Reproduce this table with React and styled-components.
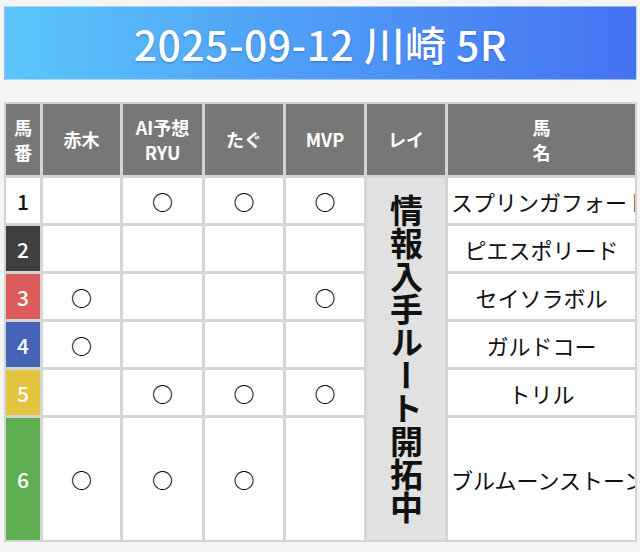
import React from "react";
import styled, { createGlobalStyle } from "styled-components";

const Global = createGlobalStyle`
  html, body { margin: 0; padding: 0; background: #f4f4f4; }
  body { font-family: "Noto Sans CJK JP", "Noto Sans", sans-serif; color: #111; }
`;

const Page = styled.div`
  padding: 6px 3px 10px 4px;
  display: flex;
  flex-direction: column;
  gap: 22px;
`;

const Banner = styled.div`
  height: 74px;
  box-sizing: border-box;
  border: 1px solid rgba(255, 255, 255, 0.45);
  background: linear-gradient(90deg, #5cc7fb 0%, #4f9ff6 45%, #4672f2 100%);
  display: flex;
  align-items: center;
  justify-content: center;
`;

const Title = styled.h1`
  margin: 0;
  color: #fff;
  font-size: 41px;
  font-weight: 500;
  letter-spacing: 0.4px;
  text-shadow: 0 1px 2px rgba(20, 60, 160, 0.45);
`;

const Table = styled.table`
  width: 633px;
  table-layout: fixed;
  border-collapse: separate;
  border-spacing: 1px;
  background: #d4d4d4;
`;

const Cell = styled.td`
  border: 1px solid #d4d4d4;
  padding: 0 6px;
  text-align: center;
  vertical-align: middle;
  overflow: hidden;
  white-space: nowrap;
`;

const HeadCell = styled.th`
  border: 1px solid #d4d4d4;
  background: #777777;
  color: #fff;
  font-size: 18px;
  font-weight: 700;
  line-height: 25px;
  height: 71px;
  padding: 0;
  text-align: center;
  vertical-align: middle;
`;

const frameColors = {
  1: ["#ffffff", "#111"],
  2: ["#3f3f3f", "#fff"],
  3: ["#dc5b5b", "#fff"],
  4: ["#4563b6", "#fff"],
  5: ["#e2c440", "#fff"],
  6: ["#5fae52", "#fff"],
};

const NumCell = styled(Cell)`
  padding: 0;
  font-size: 21px;
  font-weight: 500;
  background: ${(p) => frameColors[p.$n][0]};
  color: ${(p) => frameColors[p.$n][1]};
`;

const MarkCell = styled(Cell)`
  background: #fff;
  font-size: 21px;
  font-weight: 700;
  color: #000;
`;

const ReiCell = styled(Cell)`
  background: #e1e1e1;
  padding: 0;
`;

const VerticalText = styled.div`
  writing-mode: vertical-rl;
  font-size: 33px;
  font-weight: 700;
  color: #111;
  line-height: 1;
  margin: 0 auto;
  white-space: nowrap;
`;

const NameCell = styled(Cell)`
  background: #fff;
  font-size: 22px;
  color: #111;
  padding: 0 3px;
`;

const Row = styled.tr`
  height: ${(p) => p.$h}px;
`;

const rows = [
  { n: 1, marks: [false, true, true, true], name: "スプリンガフォート" },
  { n: 2, marks: [false, false, false, false], name: "ピエスポリード" },
  { n: 3, marks: [true, false, false, true], name: "セイソラボル" },
  { n: 4, marks: [true, false, false, false], name: "ガルドコー" },
  { n: 5, marks: [false, true, true, true], name: "トリル" },
  { n: 6, marks: [true, true, true, false], name: "ブルムーンストーン" },
];

const widths = [36, 79, 81, 80, 80, 80, 189];

export default function App() {
  return (
    <>
      <Global />
      <Page>
        <Banner>
          <Title>2025-09-12 川崎 5R</Title>
        </Banner>
        <Table>
          <colgroup>
            {widths.map((w, i) => (
              <col key={i} style={{ width: w }} />
            ))}
          </colgroup>
          <thead>
            <tr>
              <HeadCell>馬<br />番</HeadCell>
              <HeadCell>赤木</HeadCell>
              <HeadCell>AI予想<br />RYU</HeadCell>
              <HeadCell>たぐ</HeadCell>
              <HeadCell>MVP</HeadCell>
              <HeadCell>レイ</HeadCell>
              <HeadCell>馬<br />名</HeadCell>
            </tr>
          </thead>
          <tbody>
            {rows.map((r, i) => (
              <Row key={r.n} $h={r.n === 6 ? 124 : 47}>
                <NumCell $n={r.n}>{r.n}</NumCell>
                {r.marks.map((m, j) => (
                  <MarkCell key={j}>{m ? "○" : ""}</MarkCell>
                ))}
                {i === 0 && (
                  <ReiCell rowSpan={6}>
                    <VerticalText>情報入手ルート開拓中</VerticalText>
                  </ReiCell>
                )}
                <NameCell>{r.name}</NameCell>
              </Row>
            ))}
          </tbody>
        </Table>
      </Page>
    </>
  );
}
